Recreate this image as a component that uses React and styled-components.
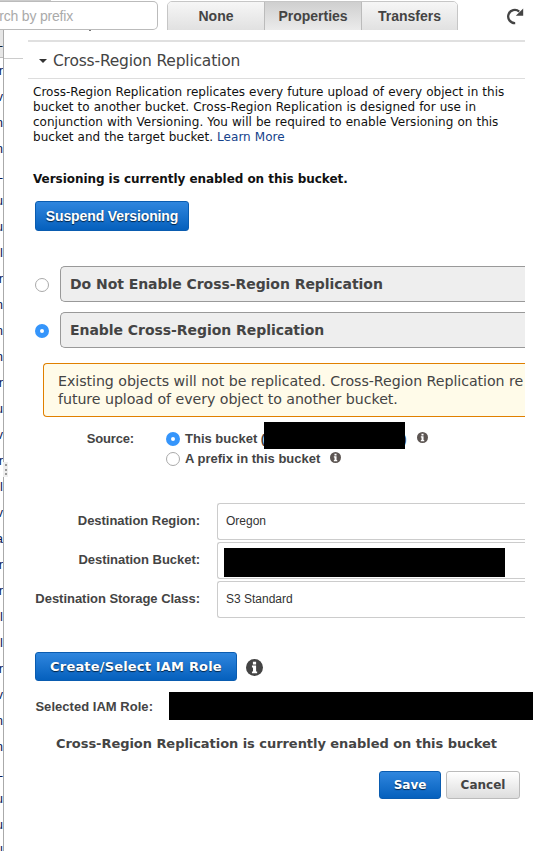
import styled, { createGlobalStyle, css } from 'styled-components';

const GlobalStyle = createGlobalStyle`
    * {
        box-sizing: border-box;
    }

    body {
        margin: 0;
        background: #fff;
        color: #444;
        overflow: hidden;
    }
`;

const verdana = css`
    font-family: Verdana, 'DejaVu Sans', sans-serif;
`;

const helvetica = css`
    font-family: 'Liberation Sans', Arial, sans-serif;
`;

const Page = styled.div`
    display: flex;
    flex-direction: column;
    width: 535px;
    height: 851px;
    overflow: hidden;
    ${helvetica}
`;

const Toolbar = styled.header`
    display: flex;
    height: 30px;
    flex: none;
    overflow: hidden;
    border-top: 1px solid transparent;
    background: linear-gradient(#ccc, #ccc) 0 0 / 51px 1px no-repeat border-box;
`;

const SearchBox = styled.div`
    width: 158px;
    height: 29px;
    border: 1px solid #bbb;
    border-left: 0;
    border-radius: 0 5px 5px 0;
    overflow: hidden;
    background: #fff;
    color: #aaa;
    font-size: 14px;
    line-height: 29px;
    white-space: nowrap;
    letter-spacing: -0.2px;
`;

const SearchHint = styled.span`
    margin-left: -25px;
`;

const Segments = styled.div`
    display: flex;
    width: 291px;
    height: 34px;
    margin-left: 9px;
    border: 1px solid #c6c6c6;
    border-radius: 5px;
    overflow: hidden;
`;

const Segment = styled.div`
    width: ${({ width }) => width}px;
    border-left: ${({ first }) => (first ? 0 : '1px solid #bbb')};
    background: ${({ active }) =>
        active ? 'linear-gradient(#cfcfcf, #efefef)' : 'linear-gradient(#f6f6f6, #dedede)'};
    color: #444;
    font-size: 14px;
    font-weight: bold;
    line-height: 28px;
    text-align: center;
`;

const RefreshIcon = styled.svg`
    width: 18px;
    height: 18px;
    margin: 6px 0 0 48px;
`;

const Body = styled.div`
    display: flex;
    flex: 1;
    min-height: 0;
`;

const Rail = styled.aside`
    position: relative;
    width: 4px;
    flex: none;
    border-right: 1px solid #aaa;
`;

const RailList = styled.div`
    width: 3px;
    height: 821px;
    overflow: hidden;
`;

const RailRow = styled.div`
    display: flex;
    justify-content: flex-end;
    height: ${({ header }) => (header ? 28 : 26)}px;
    border-bottom: ${({ header }) => (header ? '1px solid #bbb' : 0)};
    background: ${({ header }) => (header ? '#e6e6e6' : '#fff')};
    color: ${({ header }) => (header ? '#123' : '#0a1a55')};
    font-size: 13px;
    line-height: 25px;
`;

const SplitHandle = styled.div`
    position: absolute;
    top: 432px;
    left: 3px;
    display: flex;
    flex-direction: column;
    justify-content: space-evenly;
    align-items: center;
    width: 5px;
    height: 15px;
    background: #eee;
`;

const HandleDot = styled.i`
    width: 2px;
    height: 2px;
    background: #999;
`;

const Edge = styled.div`
    width: 19px;
    height: 29px;
    flex: none;
    border-bottom: 1px solid #ccc;
`;

const Panel = styled.main`
    display: flex;
    flex-direction: column;
    width: 512px;
    padding-left: 5px;
`;

const Remainder = styled.div`
    height: 10px;
`;

const Tail = styled.div`
    width: 2px;
    height: 1px;
    margin-left: 61px;
    background: #777;
`;

const SectionTitle = styled.h2`
    display: flex;
    align-items: center;
    width: 497px;
    height: 39px;
    margin: 0;
    padding: 1px 0 0 11px;
    border-top: 2px solid #e0e0e0;
    border-bottom: 1px solid #ddd;
    ${verdana}
    font-size: 15.5px;
    font-weight: normal;
    letter-spacing: -0.2px;
`;

const Caret = styled.i`
    margin-right: 6px;
    border: 4px solid transparent;
    border-top: 4px solid #333;
    border-bottom: 0;
`;

const Intro = styled.p`
    height: 60px;
    margin: 6px 0 0 5px;
    color: #111;
    ${verdana}
    font-size: 12px;
    line-height: 15px;
    white-space: nowrap;
    letter-spacing: 0.02px;
    word-spacing: 0.2px;
`;

const Link = styled.a`
    color: #15428b;
`;

const Status = styled.p`
    height: 20px;
    margin: ${({ $top }) => $top}px 0 0 ${({ $left }) => $left}px;
    ${verdana}
    font-size: ${({ $size }) => $size}px;
    font-weight: bold;
    line-height: 20px;
    color: ${({ $dark }) => ($dark ? '#111' : '#444')};
    letter-spacing: -0.05px;
    white-space: nowrap;
`;

const Button = styled.button`
    width: ${({ $width }) => $width}px;
    height: ${({ $height }) => $height}px;
    padding: 0;
    flex: none;
    border: 1px solid ${({ $plain }) => ($plain ? '#bbb' : '#0a5cb0')};
    border-radius: 3px;
    background: ${({ $plain }) =>
        $plain ? 'linear-gradient(#fff, #ddd)' : 'linear-gradient(#2f86de, #0560bd)'};
    color: ${({ $plain }) => ($plain ? '#444' : '#fff')};
    text-shadow: ${({ $plain }) => ($plain ? 'none' : '0 1px 1px #024')};
    ${({ $narrow }) => ($narrow ? helvetica : verdana)}
    font-size: ${({ $size }) => $size}px;
    font-weight: bold;
    letter-spacing: ${({ $track = 0 }) => $track}px;
    white-space: nowrap;
`;

const SuspendRow = styled.div`
    margin: 12px 0 0 7px;
    height: 30px;
    display: flex;
`;

const Choice = styled.div`
    display: flex;
    align-items: center;
    gap: 11px;
    height: 36px;
    margin: ${({ $top }) => $top}px 0 0 7px;
`;

const Radio = styled.i`
    width: 14px;
    height: 14px;
    flex: none;
    margin-top: 2px;
    border: ${({ $on }) => ($on ? '5px solid #3595fb' : '1px solid #aaa')};
    border-radius: 50%;
    background: #fff;
`;

const ChoiceBox = styled.div`
    width: 465px;
    height: 36px;
    padding-left: 9px;
    border: 1px solid #999;
    border-right: 0;
    border-radius: 5px 0 0 5px;
    background: #eee;
    ${verdana}
    font-size: 14px;
    font-weight: bold;
    line-height: 34px;
    letter-spacing: -0.05px;
    white-space: nowrap;
`;

const Notice = styled.div`
    width: 482px;
    height: 54px;
    margin: 15px 0 0 15px;
    padding: 8px 0 0 14px;
    border: 1px solid #e08000;
    border-right: 0;
    border-radius: 4px 0 0 4px;
    background: #fffbe9;
    overflow: hidden;
    ${verdana}
    font-size: 14.2px;
    line-height: 18px;
    letter-spacing: -0.05px;
    white-space: nowrap;
`;

const SourceRow = styled.div`
    display: flex;
    height: 86px;
    padding-top: 5px;
`;

const Label = styled.div`
    width: ${({ $width }) => $width}px;
    flex: none;
    text-align: right;
    font-size: 13px;
    font-weight: bold;
    line-height: ${({ $line }) => $line}px;
    letter-spacing: ${({ $track = -0.03 }) => $track}px;
    white-space: nowrap;
`;

const SourceOptions = styled.div`
    margin-left: 32px;
`;

const Redacted = styled.div`
    width: ${({ $width }) => $width}px;
    height: ${({ $height }) => $height}px;
    flex: none;
    background: #000;
`;

// the covered bucket name also hides part of both brackets
const SourceOption = styled.div`
    display: flex;
    align-items: center;
    height: ${({ $height }) => $height}px;
    padding-top: ${({ $drop = 0 }) => $drop}px;
    font-size: 13px;
    font-weight: bold;
    white-space: nowrap;

    ${Radio} {
        margin: 1px 5px 0 0;
    }

    ${Redacted} {
        position: relative;
        margin: -5px -3px 0 -1px;
    }
`;

const Info = styled.svg`
    width: ${({ $size }) => $size}px;
    height: ${({ $size }) => $size}px;
    flex: none;
    margin-left: ${({ $gap = 9 }) => $gap}px;
    margin-bottom: ${({ $lift = 0 }) => $lift}px;
    color: ${({ $dark }) => ($dark ? '#444' : '#5c5552')};
`;

const Fields = styled.div`
    display: grid;
    gap: 2px;
`;

const Field = styled.div`
    display: flex;
    gap: 17px;
    height: 37px;
`;

const FieldBox = styled.div`
    display: flex;
    align-items: ${({ $hidden }) => ($hidden ? 'flex-end' : 'center')};
    width: 308px;
    padding: ${({ $hidden }) => ($hidden ? '0 0 1px 6px' : '0 0 1px 8px')};
    border: 1px solid #ccc;
    border-right: 0;
    border-radius: 3px 0 0 3px;
    font-size: 12px;
    color: #333;
`;

const RoleRow = styled.div`
    display: flex;
    align-items: center;
    height: 29px;
    margin: 34px 0 0 7px;

    ${Info} {
        margin-top: 2px;
    }
`;

const SelectedRole = styled.div`
    display: flex;
    justify-content: space-between;
    width: 498px;
    height: 28px;
    margin: 11px 0 0 7px;
`;

const Actions = styled.div`
    display: flex;
    justify-content: flex-end;
    gap: 5px;
    width: 492px;
    margin-top: 17px;
`;

const railNames = 'r v n n L u u l r n n n r u v r l v a r r l l r v n n L u u l'.split(' ');

const InfoIcon = (props) => (
    <Info viewBox="0 0 16 16" {...props}>
        <circle cx="8" cy="8" r="8" fill="currentColor" />
        <path d="M6.5 2.6h3v2.5h-3zM5.6 6.2h3.9v5.5h1v1.8H5.6v-1.8h1V8h-1z" fill="#fff" />
    </Info>
);

const App = () => (
    <Page>
        <GlobalStyle />
        <Toolbar>
            <SearchBox><SearchHint>Search by prefix</SearchHint></SearchBox>
            <Segments>
                <Segment width={96} first>None</Segment>
                <Segment width={97} active>Properties</Segment>
                <Segment width={96}>Transfers</Segment>
            </Segments>
            <RefreshIcon viewBox="0 0 18 18">
                <path d="M9.2 16.1A6.6 6.6 0 1 1 13.2 4.6" fill="none" stroke="#444" strokeWidth="2.3" />
                <path d="M17.2 1.5v7.3H9.8z" fill="#444" />
            </RefreshIcon>
        </Toolbar>
        <Body>
            <Rail>
                <RailList>
                    <RailRow header>L</RailRow>
                    {railNames.map((name, i) => <RailRow key={i}>{name}</RailRow>)}
                </RailList>
                <SplitHandle><HandleDot /><HandleDot /><HandleDot /></SplitHandle>
            </Rail>
            <Edge />
            <Panel>
                <Remainder><Tail /></Remainder>
                <SectionTitle><Caret />Cross-Region Replication</SectionTitle>
                <Intro>
                    Cross-Region Replication replicates every future upload of every object in this<br />
                    bucket to another bucket. Cross-Region Replication is designed for use in<br />
                    conjunction with Versioning. You will be required to enable Versioning on this<br />
                    bucket and the target bucket. <Link>Learn More</Link>
                </Intro>
                <Status $top={24} $left={5} $size={12} $dark>
                    Versioning is currently enabled on this bucket.
                </Status>
                <SuspendRow>
                    <Button $width={154} $height={30} $size={14} $track={-0.12} $narrow>Suspend Versioning</Button>
                </SuspendRow>
                <Choice $top={35}>
                    <Radio />
                    <ChoiceBox>Do Not Enable Cross-Region Replication</ChoiceBox>
                </Choice>
                <Choice $top={10}>
                    <Radio $on />
                    <ChoiceBox>Enable Cross-Region Replication</ChoiceBox>
                </Choice>
                <Notice>
                    Existing objects will not be replicated. Cross-Region Replication re<br />
                    future upload of every object to another bucket.
                </Notice>
                <SourceRow>
                    <Label $width={106} $line={34} $track={-0.15}>Source:</Label>
                    <SourceOptions>
                        <SourceOption $height={27} $drop={5}>
                            <Radio $on />This bucket (<Redacted $width={141} $height={27} />)
                            <InfoIcon $size={11} $gap={10} $lift={2} />
                        </SourceOption>
                        <SourceOption $height={19}>
                            <Radio />A prefix in this bucket
                            <InfoIcon $size={11} $gap={10} $lift={2} />
                        </SourceOption>
                    </SourceOptions>
                </SourceRow>
                <Fields>
                    <Field>
                        <Label $width={172} $line={36}>Destination Region:</Label>
                        <FieldBox>Oregon</FieldBox>
                    </Field>
                    <Field>
                        <Label $width={172} $line={36}>Destination Bucket:</Label>
                        <FieldBox $hidden><Redacted $width={281} $height={29} /></FieldBox>
                    </Field>
                    <Field>
                        <Label $width={172} $line={36}>Destination Storage Class:</Label>
                        <FieldBox>S3 Standard</FieldBox>
                    </Field>
                </Fields>
                <RoleRow>
                    <Button $width={202} $height={29} $size={13} $track={0.18}>Create/Select IAM Role</Button>
                    <InfoIcon $size={17} $dark />
                </RoleRow>
                <SelectedRole>
                    <Label $width={118} $line={30} $track={0.03}>Selected IAM Role:</Label>
                    <Redacted $width={364} $height={28} />
                </SelectedRole>
                <Status $top={14} $left={28} $size={13}>
                    Cross-Region Replication is currently enabled on this bucket
                </Status>
                <Actions>
                    <Button $width={62} $height={28} $size={12}>Save</Button>
                    <Button $width={74} $height={28} $size={12} $plain>Cancel</Button>
                </Actions>
            </Panel>
        </Body>
    </Page>
);

export default App;
